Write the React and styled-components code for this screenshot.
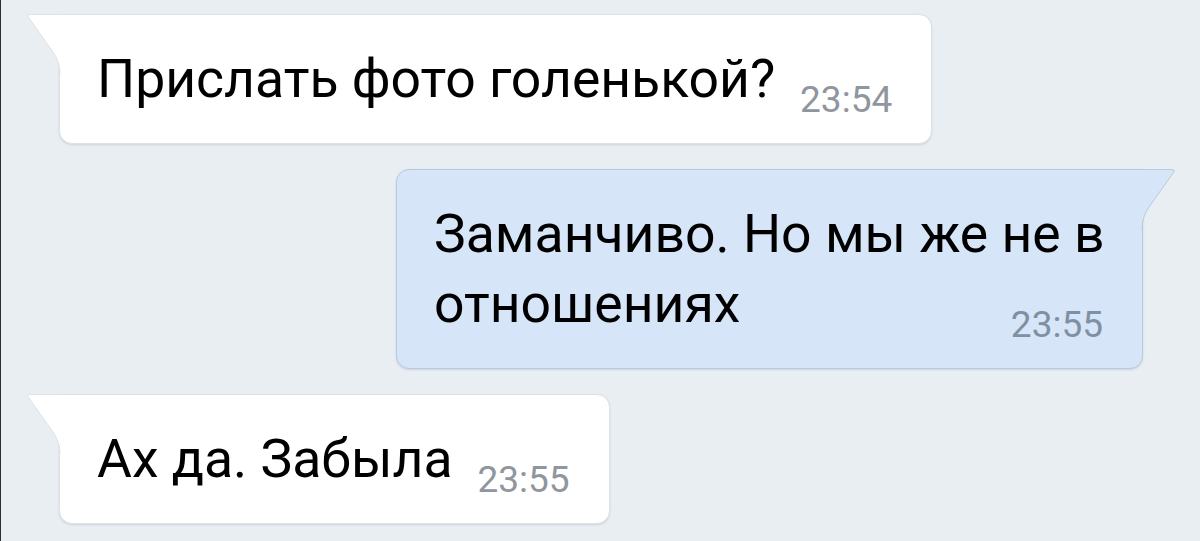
import React from 'react';
import styled, { createGlobalStyle } from 'styled-components';

const messages = [
  { id: 1, out: false, text: 'Прислать фото голенькой?', time: '23:54' },
  { id: 2, out: true, text: 'Заманчиво. Но мы же не в отношениях', time: '23:55' },
  { id: 3, out: false, text: 'Ах да. Забыла', time: '23:55' },
];

const GlobalStyle = createGlobalStyle`
  html, body {
    margin: 0;
    padding: 0;
    background: #e9eef3;
  }
  body {
    font-family: Roboto, 'Noto Sans', 'Liberation Sans', sans-serif;
    -webkit-font-smoothing: antialiased;
  }
`;

const Screen = styled.main`
  box-sizing: border-box;
  width: 1200px;
  height: 541px;
  overflow: hidden;
  padding: 14px 57px 0 58px;
  border-left: 1px solid #2b3034;
  display: flex;
  flex-direction: column;
  gap: 25px;
  background: #e9eef3;
`;

const Row = styled.div`
  display: flex;
  justify-content: ${(p) => (p.$out ? 'flex-end' : 'flex-start')};
`;

const Bubble = styled.div`
  position: relative;
  box-sizing: border-box;
  max-width: ${(p) => (p.$out ? '747px' : '900px')};
  padding: 29px 39px 29px 37px;
  display: grid;
  background: ${(p) => (p.$out ? '#d6e5f7' : '#ffffff')};
  border: 1px solid ${(p) => (p.$out ? '#b9cadd' : '#dde2e7')};
  border-radius: 13px;
  box-shadow: 0 1px 2px rgba(120, 135, 150, 0.25);
  ${(p) => (p.$out ? 'border-top-right-radius: 0;' : 'border-top-left-radius: 0;')}
`;

const Tail = styled.svg`
  position: absolute;
  top: -1px;
  ${(p) => (p.$out ? 'right: -34px; transform: scaleX(-1);' : 'left: -34px;')}
  width: 35px;
  height: 60px;
  overflow: visible;
`;

const Text = styled.p`
  grid-area: 1 / 1;
  margin: 0 ${(p) => (p.$out ? '-8px' : '0')} 0 0;
  font-size: 53.5px;
  line-height: 70px;
  color: #000;
`;

const Spacer = styled.span`
  display: inline-block;
  width: 117px;
  height: 1px;
`;

const Time = styled.span`
  grid-area: 1 / 1;
  justify-self: end;
  align-self: end;
  font-size: 37px;
  line-height: 28px;
  color: ${(p) => (p.$out ? '#7f90a3' : '#8f969d')};
`;

function BubbleTail({ out }) {
  const fill = out ? '#d6e5f7' : '#ffffff';
  const stroke = out ? '#b9cadd' : '#dde2e7';
  return (
    <Tail $out={out} viewBox='0 0 35 60'>
      <path
        d='M35 0.5 L4 0.5 Q0.5 0.5 2.2 3 L27 38 Q34 48 34 60 L35 60 Z'
        fill={fill}
      />
      <path
        d='M35 0.5 L4 0.5 Q0.5 0.5 2.2 3 L27 38 Q34 48 34 60'
        fill='none'
        stroke={stroke}
        strokeWidth='1'
      />
    </Tail>
  );
}

function Message({ out, text, time }) {
  return (
    <Row $out={out}>
      <Bubble $out={out}>
        <BubbleTail out={out} />
        <Text $out={out}>
          {text}
          <Spacer />
        </Text>
        <Time $out={out}>{time}</Time>
      </Bubble>
    </Row>
  );
}

export default function App() {
  return (
    <>
      <GlobalStyle />
      <Screen>
        {messages.map((m) => (
          <Message key={m.id} out={m.out} text={m.text} time={m.time} />
        ))}
      </Screen>
    </>
  );
}
